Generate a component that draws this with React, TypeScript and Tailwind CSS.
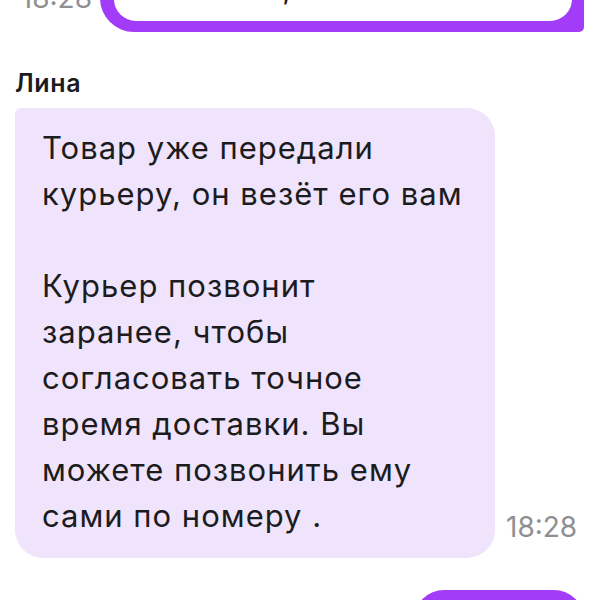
import React from 'react';

const lines = [
  'Товар уже передали',
  'курьеру, он везёт его вам',
  '',
  'Курьер позвонит',
  'заранее, чтобы',
  'согласовать точное',
  'время доставки. Вы',
  'можете позвонить ему',
  'сами по номеру .',
];

export default function App() {
  return (
    <div
      className="h-[600px] w-[600px] overflow-hidden bg-white"
      style={{ fontFamily: 'Inter, "Noto Sans", sans-serif' }}
    >
      <div className="flex flex-col pl-[15px] pr-[16px]">
        {/* previous outgoing message, scrolled mostly off screen */}
        <div className="-mt-[63px] flex items-end justify-end gap-[8px]">
          <span className="mb-[20px] text-[28px] leading-[28px] text-[#8e8e93]">18:28</span>
          <div className="w-[484px] rounded-[34px] rounded-br-[5px] bg-[#a23cf8] pt-[12px] pr-[12px] pb-[11px] pl-[14px]">
            <div className="rounded-[22px] bg-white pt-[16px] pb-[10px] pl-[30px] text-[31px] leading-[46px] tracking-[1px] text-[#1c1c1e]">
              Спасибо, понятно
            </div>
          </div>
        </div>

        <div className="mt-[35px] text-[25px] leading-[32px] font-semibold tracking-[0.6px] text-[#1c1c1e]">Лина</div>

        <div className="mt-[9px] flex items-end gap-[11px]">
          <div className="w-[480px] rounded-[28px] rounded-tl-[6px] bg-[#efe4fc] pt-[17px] pb-[19px] pl-[27px] pr-[12px] text-[31px] leading-[46px] tracking-[1px] text-[#1c1c1e]">
            {lines.map((line, i) => (
              <div key={i} className="h-[46px] whitespace-nowrap">
                {line}
              </div>
            ))}
          </div>
          <span className="mb-[17px] text-[28px] leading-[28px] text-[#8e8e93]">18:28</span>
        </div>

        <div className="mt-[32px] ml-auto h-[60px] w-[170px] rounded-[30px] bg-[#a23cf8]" />
      </div>
    </div>
  );
}
